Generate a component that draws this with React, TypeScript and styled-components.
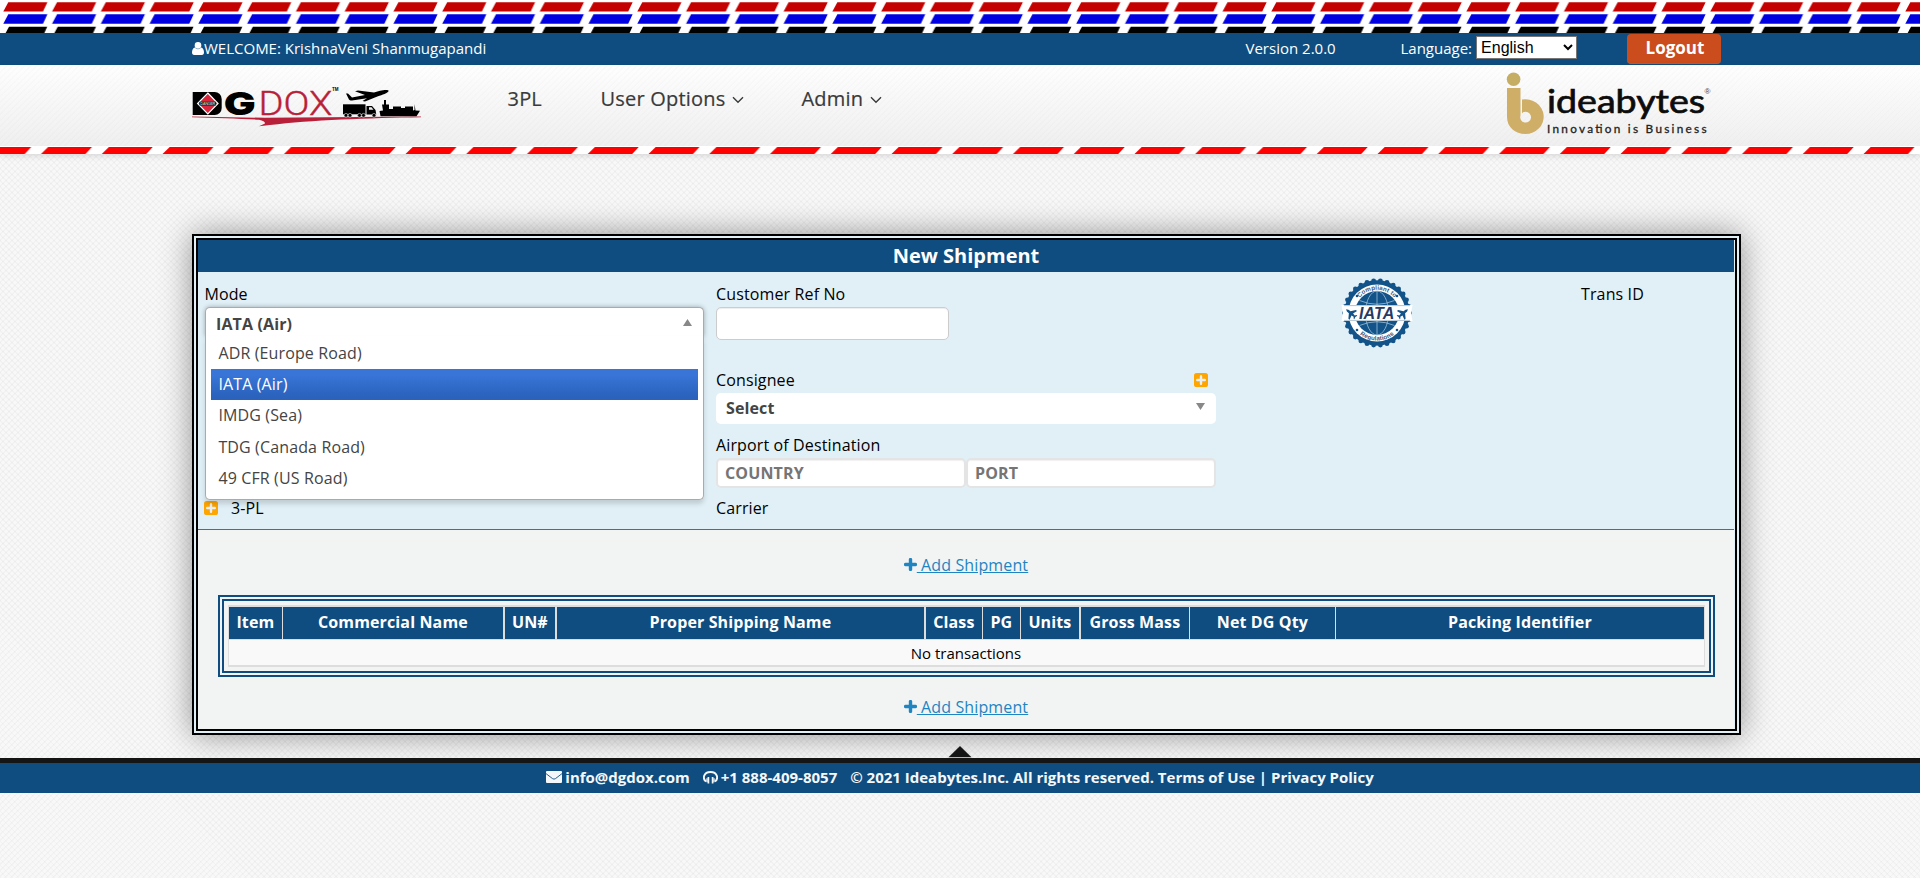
import React from "react";
import styled, { createGlobalStyle, css } from "styled-components";

const navy = "#0f4d80";
const sans = `"Open Sans", "Liberation Sans", sans-serif`;

const GlobalStyle = createGlobalStyle`
  * { box-sizing: border-box; }
  body {
    margin: 0;
    min-height: 100vh;
    font-family: ${sans};
    font-size: 16px;
    color: #000;
    background-color: #f8f8f8;
    background-image:
      repeating-linear-gradient(45deg, rgba(0,0,0,.022) 0 1.4px, transparent 1.4px 4.243px),
      repeating-linear-gradient(-45deg, rgba(0,0,0,.022) 0 1.4px, transparent 1.4px 4.243px);
  }
`;

const StripeBand = styled.svg`
  display: block;
  width: 100%;
  height: ${(p: { $h: number }) => p.$h}px;
  background: #fff;
`;

const TopBar = styled.div`
  display: flex;
  height: 32px;
  padding-left: 192px;
  background: ${navy};
  color: #fff;
  font-size: 15px;
  line-height: 31px;
  white-space: nowrap;
`;

const Welcome = styled.div`
  display: flex;
  width: 1053.5px;
  svg { margin-top: 9px; }
`;

const Version = styled.div`
  width: 155px;
`;

const Language = styled.label`
  display: flex;
  align-items: flex-start;
  width: 226.5px;
  gap: 4px;
  line-height: 30px;
`;

const LanguageSelect = styled.select`
  width: 101px;
  height: 23px;
  margin-top: 3px;
  font: 16px "Liberation Sans", Arial, sans-serif;
  color: #000;
  background: #fff;
  border: 1px solid #767676;
  border-radius: 0;
`;

const LogoutButton = styled.button`
  width: 94px;
  height: 30px;
  margin-top: 1px;
  padding: 0 0 2px 2px;
  border: 0;
  border-bottom: 1px solid #8f6a60;
  border-radius: 4px;
  background: #cb4c1c;
  color: #fff;
  font: bold 17px/27px ${sans};
`;

const Header = styled.header`
  position: relative;
  box-shadow: 0 2px 6px rgba(0, 0, 0, 0.12);
`;

const HeaderRow = styled.div`
  display: flex;
  height: 81px;
  padding-left: 185px;
  background:
    repeating-linear-gradient(-45deg, rgba(0,0,0,.012) 0 1.4px, transparent 1.4px 4.243px),
    linear-gradient(#fefefe, #efefef);
`;

const Nav = styled.nav`
  display: flex;
  align-items: flex-start;
  width: 1060px;
  padding: 19px 0 0 77.5px;
  font-size: 20px;
  font-weight: 500;
  letter-spacing: 0.2px;
  -webkit-text-stroke: 0.2px #3a3a3a;
  line-height: 30px;
  color: #3a3a3a;
`;

const NavItem = styled.a<{ $w: number }>`
  display: flex;
  align-items: center;
  gap: 7px;
  width: ${(p) => p.$w}px;
  white-space: nowrap;
  svg { margin-top: 2px; }
`;

const Card = styled.main`
  width: 1549px;
  height: 501px;
  margin: 80px 0 0 192px;
  border: 6px double #000;
  background: #e1f0f7;
  box-shadow: 0 0 30px rgba(0, 0, 0, 0.42);
  padding-right: 1px;
  letter-spacing: 0.13px;
`;

const CardTitle = styled.h1`
  height: 32px;
  margin: 0;
  background: ${navy};
  color: #fff;
  text-align: center;
  font-size: 20px;
  letter-spacing: 0;
  line-height: 31px;
`;

const FormArea = styled.section`
  display: grid;
  grid-template-columns: 511px 512px 1fr;
  height: 258px;
  border-bottom: 1px solid #2e75b5;
`;

const FormColumn = styled.div`
  display: flex;
  flex-direction: column;
  padding: 11px 5px 10px 7px;
`;

const Field = styled.div<{ $gap?: number; $bottom?: boolean }>`
  display: flex;
  flex-direction: column;
  gap: 2px;
  margin-top: ${(p) => (p.$bottom ? "auto" : `${p.$gap ?? 0}px`)};
`;

const FieldLabel = styled.div<{ $spread?: boolean; $iconGap?: boolean; $outdent?: boolean }>`
  display: flex;
  align-items: center;
  height: 22px;
  line-height: 22px;
  ${(p) => p.$outdent && css`margin-left: -0.6px;`}
  ${(p) => p.$spread && css`justify-content: space-between; padding-right: 8px;`}
  ${(p) => p.$iconGap && css`gap: 13px; margin-left: -1px;`}
`;

const TextInput = styled.input`
  width: 233px;
  height: 33px;
  border: 1px solid #ccc;
  border-radius: 5px;
  background: #fff;
  box-shadow: inset 0 1px 1px rgba(0, 0, 0, 0.075);
`;

const InputPair = styled.div`
  display: grid;
  grid-template-columns: 1fr 1fr;
  width: 500px;
`;

const PortInput = styled.input`
  min-width: 0;
  height: 30px;
  padding: 0 7px 1px;
  border: 2px solid #e4e4e4;
  border-radius: 5px;
  background: #fff;
  box-shadow: inset 0 1px 1px rgba(0, 0, 0, 0.06);
  font: bold 16px ${sans};
  letter-spacing: 0.13px;
  &::placeholder { color: #757575; opacity: 1; }
`;

const SelectBox = styled.div<{ $open?: boolean }>`
  position: relative;
  display: flex;
  justify-content: space-between;
  width: ${(p) => (p.$open ? 499 : 500)}px;
  height: 31px;
  padding: 0 11px 0 10px;
  border-radius: 5px;
  background: #fff;
  color: #444;
  font-weight: bold;
  line-height: 30px;
  > svg { margin-top: 10px; }
  ${(p) =>
    p.$open &&
    css`
      height: 30px;
      border: 1px solid #aaa;
      border-bottom: 0;
      border-radius: 5px 5px 0 0;
      box-shadow: 0 0 5px rgba(0, 0, 0, 0.3);
      line-height: 32px;
      > svg { margin-top: 11px; }
    `}
`;

const Menu = styled.ul`
  position: absolute;
  z-index: 2;
  top: 28px;
  left: -1px;
  width: 499px;
  height: 164px;
  margin: 0;
  padding: 2px 5px 0;
  list-style: none;
  border: 1px solid #aaa;
  border-top: 0;
  border-radius: 0 0 5px 5px;
  background: #fff;
  box-shadow: 0 4px 5px rgba(0, 0, 0, 0.15);
`;

const MenuItem = styled.li<{ $active?: boolean }>`
  height: 31.2px;
  padding-left: 7.4px;
  line-height: 30px;
  font-weight: normal;
  color: #444;
  ${(p) =>
    p.$active &&
    css`
      color: #fff;
      background: linear-gradient(#3875d7 20%, #2a62bc 90%);
    `}
`;

const TransColumn = styled(FormColumn)`
  flex-direction: row;
  padding: 5px 0 0 118px;
`;

const TransLabel = styled.div`
  margin: 6px 0 0 166px;
  line-height: 22px;
`;

const Shipments = styled.section`
  display: flex;
  flex-direction: column;
  align-items: center;
  height: 199px;
  background: #f1f4f3;
`;

const AddLink = styled.a<{ $top: number }>`
  display: flex;
  height: 22px;
  margin-top: ${(p) => p.$top}px;
  color: #1e85c2;
  line-height: 22px;
  text-decoration: underline;
  white-space: pre;
  svg { margin-top: 4px; }
`;

const TableFrame = styled.div`
  width: 1497px;
  height: 82px;
  margin-top: 19px;
  padding: 4px;
  border: 6px double ${navy};
`;

const TransTable = styled.div`
  height: 62px;
  border: solid #ddd;
  border-width: 2px 1px;
  background: #f9f9f9;
`;

const HeadRow = styled.div`
  display: flex;
  height: 33px;
  border-bottom: 1px solid #ddd;
`;

const HeadCell = styled.div<{ $w: number; $line: number }>`
  flex: none;
  width: ${(p) => p.$w + p.$line}px;
  padding-left: 0.8px;
  border-right: ${(p) => p.$line}px solid #ddd;
  background: ${navy};
  color: #fff;
  font-weight: bold;
  line-height: 30px;
  text-align: center;
  white-space: nowrap;
`;

const EmptyRow = styled.div`
  font-size: 15px;
  letter-spacing: 0;
  line-height: 27px;
  text-align: center;
`;

const Footer = styled.footer`
  margin-top: 11px;
  text-align: center;
`;

const UpArrow = styled.svg`
  display: block;
  margin: 0 auto;
`;

const FooterBar = styled.div`
  display: flex;
  justify-content: center;
  height: 35px;
  border-top: 5px solid #151515;
  background: ${navy};
  color: #f5f8fa;
  font-size: 15px;
  font-weight: bold;
  line-height: 28px;
  white-space: pre;
  svg { margin: 8px 3px 0 0; }
`;

const FooterPart = styled.span`
  display: flex;
  margin-right: 13px;
  &:last-child { margin-right: 0; }
`;

const TopStripes = () => (
  <StripeBand $h={33}>
    <defs>
      <pattern id="tri" width="48.77" height="37" patternUnits="userSpaceOnUse">
        <path d="M8.3 2.3H47.4L43 11.6H3.3z" fill="#c40000" />
        <path d="M8.3 14.3H47.4L43 23.7H3.3z" fill="#0000e0" />
        <path d="M9 26.7H47.2L43 36H4z" fill="#000" />
      </pattern>
    </defs>
    <rect width="100%" height="37" fill="url(#tri)" />
  </StripeBand>
);

const RedStripes = () => (
  <StripeBand $h={8}>
    <defs>
      <pattern id="red" x="31.5" width="60.75" height="8" patternUnits="userSpaceOnUse">
        <path d="M16.7 1H60.5L54 8H9.5z" fill="#fe0000" />
      </pattern>
    </defs>
    <rect width="100%" height="8" fill="url(#red)" />
  </StripeBand>
);

const UserIcon = () => (
  <svg width="12" height="13" viewBox="0 0 12 13" fill="#fff">
    <circle cx="6" cy="3.4" r="3.3" />
    <path d="M3 5.6C1 6 0 8 0 10.6 0 12 .8 13 2.1 13h7.8c1.3 0 2.1-1 2.1-2.400C12 8 11 6 9 5.600 8.300 6.500 7.200 7.200 6 7.200S3.700 6.500 3 5.600z" />
  </svg>
);

const Chevron = () => (
  <svg width="12" height="8" viewBox="0 0 12 8" fill="none" stroke="#3a3a3a" strokeWidth="1.4">
    <path d="M1 1.200 6 6.200 11 1.200" />
  </svg>
);

const Triangle = ({ up = false }: { up?: boolean }) => (
  <svg width="9" height="7" viewBox="0 0 9 7" fill="#888">
    <path d={up ? "M4.500 0 9 7H0z" : "M0 0H9L4.500 7z"} />
  </svg>
);

const PlusSquare = () => (
  <svg width="14" height="14" viewBox="0 0 14 14">
    <rect width="14" height="14" rx="2.600" fill="#ffa500" />
    <path d="M7 3.200v7.600M3.200 7h7.600" stroke="#e8f0f5" strokeWidth="2.400" strokeLinecap="round" />
  </svg>
);

const Plus = () => (
  <svg width="13" height="13" viewBox="0 0 13 13">
    <path d="M6.500 1.600v9.800M1.600 6.500h9.800" stroke="#1e85c2" strokeWidth="3.400" strokeLinecap="round" />
  </svg>
);

const Envelope = () => (
  <svg width="16" height="12" viewBox="0 0 16 12">
    <rect width="16" height="12" rx="1" fill="#f5f8fa" />
    <path d="M0 2.600 6.500 7.600Q8 8.700 9.500 7.600L16 2.600" fill="none" stroke={navy} strokeWidth=".9" />
  </svg>
);

const Headphones = () => (
  <svg width="15" height="13" viewBox="0 0 15 13" fill="none" stroke="#f5f8fa">
    <path d="M3 10.600C-.8 7.500 .6 1 7.500 1S15.800 7.500 12 10.600" strokeWidth="1.900" />
    <path d="M5.400 6v6.600M9.600 6v6.600" strokeWidth="1.700" />
    <path d="M4 7.300v4M11 7.300v4" strokeWidth="1.300" />
  </svg>
);

const DgLogo = () => (
  <svg width="245" height="81" viewBox="185 65 245 81">
    <text x="223.800" y="115.200" fontFamily="Inter, sans-serif" fontWeight="900" fontSize="32" textLength="32" lengthAdjust="spacingAndGlyphs">G</text>
    <rect x="192.700" y="92" width="18" height="23" />
    <rect x="196" y="92" width="25.700" height="23" rx="7" />
    <path d="M207.800 93 218 103.500 207.800 114 197.600 103.500z" fill="#d9243c" stroke="#fff" strokeWidth="1.200" />
    <rect x="199.500" y="101.800" width="16.600" height="3.600" />
    <text x="200.300" y="105.100" fontSize="4" fontWeight="bold" fill="#bbb" textLength="15" fontFamily="Liberation Sans, sans-serif">DANGER</text>
    <text x="258.500" y="115" fill="#b81f38" stroke="#b81f38" strokeWidth=".4" fontFamily="Roboto, sans-serif" fontWeight="300" fontSize="33.500" textLength="74" lengthAdjust="spacingAndGlyphs">DOX</text>
    <text x="332" y="90.500" fontSize="4.500" fontWeight="bold" fontFamily="Liberation Sans, sans-serif">TM</text>
    <path d="M192 116.500 265 117.800 421 116.600 421 117.200C370 118 310 120 270 125L259 126.200 265 123.500Q265 121 259 119.800C240 118.500 215 118 192 117.200z" fill="#b81f38" />
    <path d="M346 93.500 348 93.600 352 97.600 365 95 355 91.200 358 90.600 374 92.500 380 90.800C384 89.600 389 89.500 388.600 91 388 93 382 95 378 96.200L365 101.500 362.500 101 367 98.300 352 100.600C350 100.600 348.500 99.500 348.500 98.500z" />
    <path d="M343 104.300h22.500v10H343z" />
    <path d="M366.500 106h5.500l3.500 4 .8 4.500h-9.800z" />
    <path d="M369 107.200h2.500l2 2.500H369z" fill="#eee" />
    <g fill="#000" stroke="#ddd" strokeWidth=".6">
      <circle cx="346" cy="115.300" r="1.900" /><circle cx="350" cy="115.300" r="1.900" />
      <circle cx="359.500" cy="115.300" r="1.900" /><circle cx="363.500" cy="115.300" r="1.900" />
      <circle cx="374" cy="115.300" r="1.900" />
    </g>
    <path d="M379.500 111 383 110.500 382 104.500H384V100H386V104.500H389V109H393V106.500H401V108H405V106.500H413V110.500L414.500 110V104L415.500 110.500 420 110.800 416.500 116.300H380.500z" />
  </svg>
);

const IdeabytesLogo = () => (
  <svg width="230" height="81" viewBox="1490 65 230 81">
    <circle cx="1513.600" cy="79.200" r="6.800" fill="#c6ad64" />
    <path
      fillRule="evenodd"
      fill="#cfae68"
      d="M1507 88H1520.500V115.500A5.400 5.400 0 1 0 1525.500 111.800Q1522.300 112 1522 113.500V99.600A18.300 17.400 0 1 1 1525.500 134.100C1515 134.100 1507 127 1507 117z"
    />
    <text x="1547" y="112.800" fontFamily="Lato, sans-serif" fontSize="32.500" fontWeight="400" stroke="#0c0c0c" strokeWidth=".7" textLength="158" lengthAdjust="spacingAndGlyphs" fill="#0c0c0c">ideabytes</text>
    <text x="1704.500" y="94" fontFamily="Liberation Sans, sans-serif" fontSize="8" fill="#444">®</text>
    <text x="1547" y="133.300" fontFamily="Lato, sans-serif" fontSize="11.800" fontWeight="400" stroke="#222" strokeWidth=".3" textLength="159.500" fill="#222">Innovation is Business</text>
  </svg>
);

const teeth = Array.from({ length: 30 }, (_, i) => {
  const a = (i * Math.PI) / 15;
  return <circle key={i} cx={38 + 32.3 * Math.cos(a)} cy={36 + 32.3 * Math.sin(a)} r="2.400" />;
});

const smallPlane = "M0-5.500 1.200-3.500V-1L5.500 2V3.500L1.200 2.200 .8 4.600 2.200 5.700V6.600L0 6-2.200 6.600V5.700L-.8 4.600-1.200 2.200-5.500 3.500V2L-1.200-1V-3.500z";

const IataBadge = () => (
  <svg width="76" height="72" viewBox="0 0 76 72">
    <g fill="#12538a">{teeth}<circle cx="38" cy="36" r="32.800" /></g>
    <circle cx="38" cy="36" r="28.500" fill="#fff" />
    <circle cx="38" cy="36" r="22" fill="#12538a" />
    <g fill="none" stroke="#9fc0d8" strokeWidth=".8">
      <ellipse cx="38" cy="36" rx="11.500" ry="22" />
      <path d="M38 14v44M20.500 23.500Q38 31 55.500 23.500M20.500 48.500Q38 41 55.500 48.500" />
    </g>
    <path d="M2.500 28H73.500L72 36 73.500 44H2.500L4 36z" fill="#fff" />
    <path d="M5 28.600H71M5 43.400H71" stroke="#a8bccd" strokeWidth=".9" />
    <text x="20" y="41.500" fontFamily="Liberation Sans, sans-serif" fontSize="16" fontWeight="bold" fontStyle="italic" fill="#273a63" textLength="35.500" lengthAdjust="spacingAndGlyphs">IATA</text>
    <g fill="#12538a">
      <path d={smallPlane} transform="translate(11.500 36) rotate(-50) scale(1.050)" />
      <path d={smallPlane} transform="translate(64.500 36) rotate(50) scale(1.050)" />
      <circle cx="18" cy="19" r="1.300" /><circle cx="58" cy="19" r="1.300" />
      <circle cx="18" cy="53" r="1.300" /><circle cx="58" cy="53" r="1.300" />
    </g>
    <defs>
      <path id="arcTop" d="M14.800 36A23.200 23.200 0 0 1 61.200 36" />
      <path id="arcBottom" d="M10.500 36A27.500 27.500 0 0 0 65.500 36" />
    </defs>
    <g fontFamily="Liberation Sans, sans-serif" fontSize="6.200" fontWeight="bold" fill="#3d5578" textAnchor="middle">
      <text><textPath href="#arcTop" startOffset="50%">Compliant to</textPath></text>
      <text><textPath href="#arcBottom" startOffset="50%">Regulations</textPath></text>
    </g>
  </svg>
);

const modes = ["ADR (Europe Road)", "IATA (Air)", "IMDG (Sea)", "TDG (Canada Road)", "49 CFR (US Road)"];

const columns: [string, number, number][] = [
  ["Item", 53, 1],
  ["Commercial Name", 220, 2],
  ["UN#", 50, 2],
  ["Proper Shipping Name", 367, 2],
  ["Class", 56, 1],
  ["PG", 37, 1],
  ["Units", 58, 2],
  ["Gross Mass", 108, 1],
  ["Net DG Qty", 145, 1],
  ["Packing Identifier", 368, 0],
];

export default function App() {
  return (
    <>
      <GlobalStyle />
      <TopStripes />
      <TopBar>
        <Welcome><UserIcon />WELCOME: KrishnaVeni Shanmugapandi</Welcome>
        <Version>Version 2.0.0</Version>
        <Language>
          Language:
          <LanguageSelect defaultValue="English"><option>English</option></LanguageSelect>
        </Language>
        <LogoutButton>Logout</LogoutButton>
      </TopBar>
      <Header>
        <HeaderRow>
          <DgLogo />
          <Nav>
            <NavItem $w={93}>3PL</NavItem>
            <NavItem $w={201}>User Options<Chevron /></NavItem>
            <NavItem $w={120}>Admin<Chevron /></NavItem>
          </Nav>
          <IdeabytesLogo />
        </HeaderRow>
        <RedStripes />
      </Header>

      <Card>
        <CardTitle>New Shipment</CardTitle>
        <FormArea>
          <FormColumn>
            <Field>
              <FieldLabel $outdent>Mode</FieldLabel>
              <SelectBox $open>
                IATA (Air)
                <Triangle up />
                <Menu>
                  {modes.map((m) => <MenuItem key={m} $active={m === "IATA (Air)"}>{m}</MenuItem>)}
                </Menu>
              </SelectBox>
            </Field>
            <Field $bottom>
              <FieldLabel $iconGap><PlusSquare />3-PL</FieldLabel>
            </Field>
          </FormColumn>
          <FormColumn>
            <Field>
              <FieldLabel>Customer Ref No</FieldLabel>
              <TextInput />
            </Field>
            <Field $gap={29}>
              <FieldLabel $spread>Consignee<PlusSquare /></FieldLabel>
              <SelectBox>Select<Triangle /></SelectBox>
            </Field>
            <Field $gap={10}>
              <FieldLabel>Airport of Destination</FieldLabel>
              <InputPair>
                <PortInput placeholder="COUNTRY" />
                <PortInput placeholder="PORT" />
              </InputPair>
            </Field>
            <Field $bottom>
              <FieldLabel>Carrier</FieldLabel>
            </Field>
          </FormColumn>
          <TransColumn>
            <IataBadge />
            <TransLabel>Trans ID</TransLabel>
          </TransColumn>
        </FormArea>
        <Shipments>
          <AddLink $top={24}><Plus /> Add Shipment</AddLink>
          <TableFrame>
            <TransTable>
              <HeadRow>
                {columns.map(([name, w, line]) => <HeadCell key={name} $w={w} $line={line}>{name}</HeadCell>)}
              </HeadRow>
              <EmptyRow>No transactions</EmptyRow>
            </TransTable>
          </TableFrame>
          <AddLink $top={19}><Plus /> Add Shipment</AddLink>
        </Shipments>
      </Card>

      <Footer>
        <UpArrow width="24" height="12" viewBox="0 0 24 12" fill="#151515"><path d="M12 0 23.500 11.300H.5z" /></UpArrow>
        <FooterBar>
          <FooterPart><Envelope />info@dgdox.com</FooterPart>
          <FooterPart><Headphones />+1 888-409-8057</FooterPart>
          <FooterPart>© 2021 Ideabytes.Inc. All rights reserved. Terms of Use | Privacy Policy</FooterPart>
        </FooterBar>
      </Footer>
    </>
  );
}
